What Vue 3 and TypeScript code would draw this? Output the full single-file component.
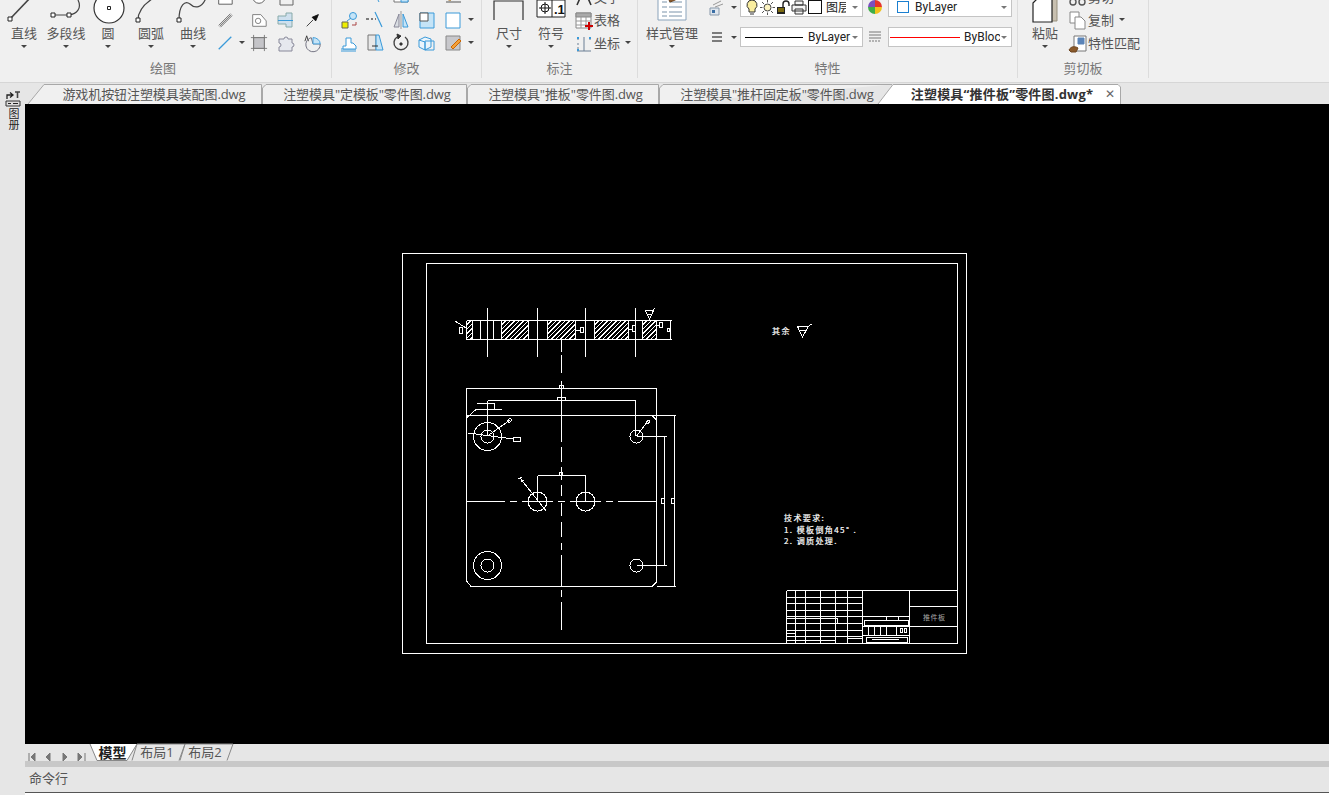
<script setup lang="ts">
interface Shape {
	d: string
	s?: string
	f?: string
	w?: number
}

interface BigTool {
	label: string
	width: number
	shapes: Shape[]
}

const blue = "#3a9ad9"
const pale = "#c5e4f7"

// path for a circle, the icons use a lot of them
const circ = (x: number, y: number, r: number) =>
	`M${x - r} ${y}a${r} ${r} 0 1 0 ${r * 2} 0a${r} ${r} 0 1 0 ${-r * 2} 0`
const sq = (x: number, y: number, r = 2) => `M${x - r} ${y - r}h${r * 2}v${r * 2}h${-r * 2}z`

const drawTools: BigTool[] = [
	{
		label: "直线",
		width: 48,
		shapes: [
			{ d: "M6 34L27 12", s: "#444", w: 1.6 },
			{ d: sq(6, 34), s: "#222", f: "#fff" },
		],
	},
	{
		label: "多段线",
		width: 36,
		shapes: [
			{ d: "M7 30H23C31 29 36 23 32 15", s: "#444", w: 1.2 },
			{ d: sq(7, 30), s: "#222", f: "#fff" },
			{ d: sq(23, 30), s: "#222", f: "#fff" },
		],
	},
	{
		label: "圆",
		width: 48,
		shapes: [
			{ d: circ(21, 23, 15), s: "#333", f: "#fff", w: 1.2 },
			{ d: sq(21, 23, 1.5), s: "#222", f: "#fff" },
		],
	},
	{
		label: "圆弧",
		width: 38,
		shapes: [
			{ d: "M7 35C7 27 12 20 21 14", s: "#444", w: 1.2 },
			{ d: sq(7, 35), s: "#222", f: "#fff" },
		],
	},
	{
		label: "曲线",
		width: 46,
		shapes: [
			{ d: "M6 35C6 20 12 15 17 19C22 24 29 23 33 13", s: "#444", w: 1.2 },
			{ d: sq(6, 35), s: "#222", f: "#fff" },
		],
	},
]

// null keeps the grid cell empty
const drawGrid: (Shape[] | null | "caret")[] = [
	[{ d: "M3 10h15v8H3z", f: "#fff" }],
	null,
	[{ d: circ(10, 10, 7), f: "#fff" }],
	[{ d: "M4 6V18H17V6M2 8h16", s: "#666" }],
	null,

	[{ d: "M3 16L16 3M5 18L18 5M4 17L17 4", s: "#666", w: 1 }],
	null,
	[
		{ d: "M3 4h9l6 7v6H3z", s: "#777", f: "#fff" },
		{ d: circ(9, 11, 3), s: "#777" },
	],
	[
		{ d: "M2 6h8v-3h6v14h-6v-3H2z", s: "#8aa", f: "#cfe0ee" },
		{ d: "M2 10.5h15", s: blue },
	],
	[
		{ d: "M3 17L10 10", s: "#333" },
		{ d: "M9 7l7-3-3 7z", s: "#111", f: "#111" },
	],

	[{ d: "M3 17L17 3", s: blue, w: 1.4 }],
	"caret",
	[
		{ d: "M4 4h12v12H4z", s: "#888", f: "#c4c4c8" },
		{ d: "M1 4h18M1 16h18M4 1v18M16 1v18", s: "#777" },
	],
	[{ d: "M3 6h5a2 2 0 1 1 4 0h4v4a2 2 0 1 1 0 4v4H3v-4a2 2 0 1 0 0-4z", s: "#889", f: "#e6e8ee" }],
	[
		{ d: "M8 4A8 8 0 1 0 18 11H10z", s: "#667" },
		{ d: "M10 4a8 7 0 0 1 8 7H10z", s: blue, f: pale },
		{ d: "M1 8L3 2L5 8", s: "#333" },
	],
]

const modifyGrid: (Shape[] | null | "caret")[] = [
	[{ d: "M10 1v9M7 7l3 4 3-4", s: "#444" }],
	[{ d: "M7 1L14 15", s: blue }],
	[
		{ d: "M3 1h14v14H3z", s: "#777", f: "#fff" },
		{ d: "M10 1h7v14h-7z", s: blue, f: pale },
	],
	[{ d: "M2 1h16v11H2z", s: "#777", f: "#fff" }],
	[
		{ d: "M4 12L12 3l3 3-8 8z", s: "#b96", f: "#eeb98a" },
		{ d: "M3 15h15", s: "#555" },
	],
	null,

	[
		{ d: circ(14, 6, 3.5), s: blue, f: pale },
		{ d: "M8 11l4-3", s: blue },
		{ d: "M3 12h6v6H3z", s: "#665", f: "#ee0" },
		{ d: "M13 15h4v-3", s: "#a44" },
	],
	[
		{ d: "M1 9h3M6 9h2M10 9h1", s: "#555", w: 1.6 },
		{ d: "M10 2l7 15", s: blue, w: 1.2 },
	],
	[
		{ d: "M8 4L3 17h5z", s: "#889", f: "#d9dde2" },
		{ d: "M12 4l5 13h-5z", s: blue, f: pale },
		{ d: "M10 1v18", s: "#999" },
	],
	[
		{ d: "M3 3h14v15H3z", s: blue, f: pale },
		{ d: "M3 3h8v8H3z", s: "#555", f: "#fff" },
	],
	[{ d: "M3 3h14v15H3z", s: blue, f: "#fff" }],
	"caret",

	[
		{ d: "M2 16h15M2 18h15", s: blue },
		{ d: "M4 13h3V5h5v5h2l3 3v3H4z", s: blue, f: "#fff" },
	],
	[
		{ d: "M3 2h8v15H3z", s: "#777", f: "#e8e8e8" },
		{ d: "M11 2h3l4 15h-7z", s: blue, f: pale },
		{ d: "M7 13h6", s: "#333" },
	],
	[
		{ d: "M14 4A7 7 0 1 1 6 4", s: "#444", w: 1.4 },
		{ d: "M6 1l4 2-3 3z", s: "#333", f: "#333" },
		{ d: sq(10, 11, 1), s: "#333", f: "#333" },
	],
	[
		{ d: "M2 7l6-3 6 2v8l-6 3-6-3z", s: blue, f: "#eaf5fc" },
		{ d: "M8 8h9v9H8z", s: blue },
		{ d: "M2 7l6 2v8", s: blue },
	],
	[
		{ d: "M3 3h14v14H3z", s: "#888", f: "#c8c8cc" },
		{ d: "M8 14l8-8 2 2-8 8z", s: "#c60", f: "#f3a13c" },
	],
	"caret",
]

const dimTools: BigTool[] = [
	{ label: "尺寸", width: 54, shapes: [{ d: "M5 35V16H34V35", s: "#333", w: 1.2 }] },
	{ label: "符号", width: 30, shapes: [{ d: "M6 15H34V32H6zM21 15V32", s: "#222", f: "#fff" }, { d: `${circ(14, 23, 4)}M8 23H20M14 17V29`, s: "#111" }] },
]

const styleTool: BigTool = {
	label: "样式管理",
	width: 68,
	shapes: [
		{ d: "M6 11H34V35H6z", s: "#8aa3bb", f: "#fff" },
		{ d: "M10 17H15M10 22H15M10 27H15M10 31H15M17 17H30M17 22H30M17 27H30M17 31H30", s: "#7b93aa" },
		{ d: "M17 15C22 13 27 8 30 2L33 4C30 11 25 15 18 17z", s: "#6d4520", f: "#8a5a2b" },
	],
}

const pasteTool: BigTool = {
	label: "粘贴",
	width: 54,
	shapes: [
		{ d: "M20 11H32V36H20z", s: "#98917f", f: "#c8c0b0" },
		{ d: "M8 18L14 12H27V37H8z", s: "#222", f: "#fff", w: 1.2 },
	],
}

const dimList: { label: string; caret?: boolean; shapes: Shape[] }[] = [
	{ label: "文字", shapes: [{ d: "M3 18L10 2l7 16M6 12h8", s: "#333", w: 1.6 }] },
	{
		label: "表格",
		shapes: [
			{ d: "M2 3H17V18H2z", s: "#888", f: "#fff" },
			{ d: "M2 3H17V7H2z", s: "#888", f: "#aaa" },
			{ d: "M2 11H17M2 15H17M7 7V18M12 7V18", s: "#999" },
			{ d: "M11 16h8M15 12v8", s: "#c00", w: 2 },
		],
	},
	{
		label: "坐标",
		caret: true,
		shapes: [
			{ d: "M3 18H17M10 4V18M4 5v2M4 10v2M4 14v2M16 5v2", s: "#6a7f94" },
			{ d: "M3 5h2M15 5h2M3 17h2", s: blue, w: 2 },
		],
	},
]

const clipList: { label: string; caret?: boolean; shapes: Shape[] }[] = [
	{ label: "剪切", shapes: [{ d: `${circ(5, 15, 3)}${circ(14, 15, 3)}M6 12L14 3M13 12L5 3`, s: "#555", w: 1.4 }] },
	{
		label: "复制",
		caret: true,
		shapes: [
			{ d: "M2 2H11V13H2z", s: "#888", f: "#fff" },
			{ d: "M7 7H13L17 11V19H7z", s: "#888", f: "#fff" },
		],
	},
	{
		label: "特性匹配",
		shapes: [
			{ d: "M6 3H18V18H6z", s: "#777", f: "#fff" },
			{ d: "M10 5H16V11H10z", s: "#5b84b8", f: "#5b84b8" },
			{ d: "M1 17C3 13 7 13 10 15L8 19H3z", s: "#6d4520", f: "#8a5a2b" },
		],
	},
]

const docTabs = [
	{ name: "游戏机按钮注塑模具装配图.dwg", width: 234, pad: 18, kind: "first" },
	{ name: "注塑模具\"定模板\"零件图.dwg", width: 205, pad: 5, kind: "plain" },
	{ name: "注塑模具\"推板\"零件图.dwg", width: 192, pad: 5, kind: "plain" },
	{ name: "注塑模具\"推杆固定板\"零件图.dwg", width: 219, pad: 17, kind: "open" },
	{ name: "注塑模具“推件板”零件图.dwg*", width: 243, pad: 5, kind: "active" },
]

const tabOutline = (w: number, kind: string) => {
	if (kind === "first") return `M0 20L16 .5H${w - 0.5}V20`
	if (kind === "open") return `M.5 20V4L4 .5H${w + 14}`
	if (kind === "active") return `M0 20L15 .5H${w - 3}L${w - 0.5} 3V20`
	return `M.5 20V4L4 .5H${w - 0.5}V20`
}

const sheets = [
	{ name: "模型", active: true, outline: "M0 0L7 16.500H37L47 0" },
	{ name: "布局1", active: false, outline: "M-5 16.500L0 0H48L42 16.500" },
	{ name: "布局2", active: false, outline: "M-5 16.500L0 0H48L42 16.500" },
]

// drawing, in window coordinates
const frame = "M402.500 253.500H966.500V653.500H402.500zM426.500 263.500H957.500V643.500H426.500z"

const section = [
	"M466.500 320.500H671.500M466.500 339.500H671.500M466.500 320.500V339.500",
	"M472.500 320.500V339.500M480.500 320.500V339.500M493.500 320.500V339.500M501.500 320.500V339.500M528.500 320.500V339.500",
	"M547.500 320.500V339.500M575.500 320.500V339.500M594.500 320.500V339.500M628.500 320.500V339.500M642.500 320.500V339.500M656.500 320.500V339.500M670.500 320.500V339.500",
	"M487.500 308V357M537.500 308V357M585.500 308V357M635.500 308V357",
	"M561.500 340V352M561.500 355V373",
	"M455 321L466 328M459.500 327.500h3v6h-3zM580.500 327.500h3v5h-3zM575 330h5M632.500 325.500h3v6h-3zM628 329h4M659.500 322.500h3v5h-3zM656 325h3M667.500 328.500h2v3h-2z",
	"M645.500 310.500h8l-4 9zM647 314.500h5M653 310L654.500 308.500",
].join("")

// section hatching: 45 degree lines cut to each region
const hatchLines = (x0: number, w: number, y0 = 320.5, h = 19, step = 4.5) => {
	let d = ""
	for (let c = x0 - h + step; c < x0 + w; c += step) {
		const left = Math.max(c, x0)
		const right = Math.min(c + h, x0 + w)
		d += `M${left} ${y0 + h - (left - c)}L${right} ${y0 + h - (right - c)}`
	}
	return d
}

const hatches = [
	hatchLines(466.5, 6),
	hatchLines(501.5, 27),
	hatchLines(547.5, 28),
	hatchLines(594.5, 34),
	hatchLines(642.5, 14),
].join("")

const plan = [
	"M466.500 388V581L471 586.500H652L656.500 582V388",
	"M466.500 415.500H675.500M466.500 388.500H656.500M652 415.500L656.500 420",
	"M466.500 418L476 409.500H502M476.500 403.500H494.500V409.500M487.500 400.500H635.500M487.500 400.500V436M635.500 400.500V436",
	"M557.500 397.500H565.500V400.500H557.500zM559.500 385.500H563.500V388.500H559.500z",
	"M561.500 381V442M561.500 447V462M561.500 467V480M561.500 485V496M561.500 503V516M561.500 522V537M561.500 543V550M561.500 555V586M561.500 590V597M561.500 602V630",
	"M466.500 501.500H505M510 501.500H517M522 501.500H553M558 501.500H565M570 501.500H601M606 501.500H613M618 501.500H656.500",
	"M537.500 475.500V501M585.500 475.500V501M537.500 475.500H585.500M559.500 472.500H562.500V475.500H559.500z",
	"M520 478L546.500 511.500M518.500 479l3-2M521 482l3-2",
	"M468 433L513 439M487.500 436L510 420M513.500 437.500H520.500V441.500H513.500zM507 421l3-3 2 2-3 3z",
	"M636.500 436L648 421M646 423l2-3 2 1-2 3z",
	"M636.500 436.500H666.500M664.500 436.500V565.500M636.500 565.500H666.500M674.500 415.500V586.500M656.500 586.500H675.500",
	"M661.500 498.500H664.500V503.500H661.500zM671.500 498.500H674.500V503.500H671.500z",
	circ(487.5, 436.5, 14),
	circ(487.5, 436.5, 6.5),
	circ(636.5, 436.5, 6.5),
	circ(537.5, 501.5, 9.5),
	circ(585.5, 501.5, 9.5),
	circ(487.5, 565.5, 14),
	circ(487.5, 565.5, 6.5),
	circ(636.5, 565.5, 6.5),
].join("")

const roughness = "M797.500 326.500H808.500L802.500 337zM799.500 330.500H806.500M808.500 326.500L811.500 324"

const titleBlock = [
	"M786.500 590.500H957.500V643M786.500 590.500V643",
	"M795.500 590.500V643M805.500 590.500V643M820.500 590.500V643M835.500 590.500V643M847.500 590.500V643M862.500 590.500V643M909.500 590.500V643",
	"M786.500 597.500H862.500M786.500 603.500H862.500M786.500 610.500H862.500M786.500 616.500H862.500M786.500 623.500H862.500M786.500 630.500H862.500M786.500 636.500H862.500",
	"M786.500 618.500H837.500V623M786.500 633.500H796M786.500 640.500H835M848 638.500H862",
	"M862.500 616.500H909.500M862.500 626.500H909.500M862.500 635.500H909.500",
	"M864.500 620.500H908.500V625H864.500zM886.500 616.500V620M898.500 616.500V620",
	"M868.500 626.500V635M874.500 626.500V635M880.500 626.500V635M886.500 626.500V635M896.500 626.500V635",
	"M866.500 637.500H907.500V642H866.500zM872 639.500H899",
	"M900.500 628.500H902.500V632H900.500zM904.500 628.500H906.500V632H904.500z",
	"M909.500 606.500H957.500M909.500 626.500H957.500",
].join("")
</script>

<template>
	<div class="app">
		<div class="ribbon">
			<section class="panel draw-panel" style="width: 332px">
				<div class="panel-body">
					<div v-for="tool in drawTools" :key="tool.label" class="big" :style="{ width: tool.width + 'px' }">
						<svg class="big-icon" width="40" height="40" viewBox="0 0 40 40">
							<path v-for="(p, i) in tool.shapes" :key="i" :d="p.d" :stroke="p.s ?? '#555'" :fill="p.f ?? 'none'" :stroke-width="p.w ?? 1" />
						</svg>
						<span class="big-label">{{ tool.label }}</span>
						<i class="caret big-caret"></i>
					</div>
					<div class="icon-grid draw-grid">
						<div v-for="(cell, n) in drawGrid" :key="n" class="cell">
							<i v-if="cell === 'caret'" class="caret"></i>
							<svg v-else-if="cell" width="20" height="20" viewBox="0 0 20 20">
								<path v-for="(p, i) in cell" :key="i" :d="p.d" :stroke="p.s ?? '#555'" :fill="p.f ?? 'none'" :stroke-width="p.w ?? 1" />
							</svg>
						</div>
					</div>
				</div>
				<div class="panel-title">绘图</div>
			</section>

			<section class="panel" style="width: 150px">
				<div class="panel-body modify-body">
					<div class="icon-grid modify-grid">
						<div v-for="(cell, n) in modifyGrid" :key="n" class="cell">
							<i v-if="cell === 'caret'" class="caret"></i>
							<svg v-else-if="cell" width="20" height="20" viewBox="0 0 20 20">
								<path v-for="(p, i) in cell" :key="i" :d="p.d" :stroke="p.s ?? '#555'" :fill="p.f ?? 'none'" :stroke-width="p.w ?? 1" />
							</svg>
						</div>
					</div>
				</div>
				<div class="panel-title">修改</div>
			</section>

			<section class="panel" style="width: 156px">
				<div class="panel-body">
					<div v-for="tool in dimTools" :key="tool.label" class="big" :style="{ width: tool.width + 'px' }">
						<svg class="big-icon" width="40" height="40" viewBox="0 0 40 40">
							<path v-for="(p, i) in tool.shapes" :key="i" :d="p.d" :stroke="p.s ?? '#555'" :fill="p.f ?? 'none'" :stroke-width="p.w ?? 1" />
							<text v-if="tool.label === '符号'" x="23" y="29" class="symbol-text">.1</text>
						</svg>
						<span class="big-label">{{ tool.label }}</span>
						<i class="caret big-caret"></i>
					</div>
					<div class="tool-list dim-list">
						<div v-for="item in dimList" :key="item.label" class="tool-row">
							<svg width="20" height="20" viewBox="0 0 20 20">
								<path v-for="(p, i) in item.shapes" :key="i" :d="p.d" :stroke="p.s ?? '#555'" :fill="p.f ?? 'none'" :stroke-width="p.w ?? 1" />
							</svg>
							<span>{{ item.label }}</span>
							<i v-if="item.caret" class="caret"></i>
						</div>
					</div>
				</div>
				<div class="panel-title">标注</div>
			</section>

			<section class="panel" style="width: 380px">
				<div class="panel-body">
					<div class="big" :style="{ width: styleTool.width + 'px' }">
						<svg class="big-icon" width="40" height="40" viewBox="0 0 40 40">
							<path v-for="(p, i) in styleTool.shapes" :key="i" :d="p.d" :stroke="p.s ?? '#555'" :fill="p.f ?? 'none'" :stroke-width="p.w ?? 1" />
						</svg>
						<span class="big-label">{{ styleTool.label }}</span>
						<i class="caret big-caret"></i>
					</div>
					<div class="props">
						<div class="prop-slot">
							<svg width="18" height="18" viewBox="0 0 18 18">
								<path d="M2 10h9v7H2z" stroke="#8899aa" fill="#dfe6ee" />
								<path d="M4 12h3v3H4z" fill="#3a6ea5" />
								<path d="M5 7L13 3M7 9L15 6" stroke="#999" fill="none" />
							</svg>
							<i class="caret"></i>
						</div>
						<div class="combo">
							<div class="layer-icons">
								<svg width="14" height="17" viewBox="0 0 14 17">
									<path d="M7 1a5 5 0 0 0-3 9v3h6v-3a5 5 0 0 0-3-9z" stroke="#333" fill="#f9eda0" />
									<path d="M5 15h4" stroke="#333" />
								</svg>
								<svg width="15" height="15" viewBox="0 0 15 15">
									<path :d="circ(7.5, 7.5, 3.5)" stroke="#444" fill="#fbf3c0" />
									<path d="M7.500 0v2.500M7.500 12.500V15M0 7.500h2.500M12.500 7.500H15M2 2l2 2M11 11l2 2M13 2l-2 2M4 11l-2 2" stroke="#555" />
								</svg>
								<svg width="14" height="15" viewBox="0 0 14 15">
									<path d="M1 7h8v7H1z" fill="#222" />
									<path d="M2 9h6M2 11h6" stroke="#d8b500" />
									<path d="M7 7V4a3 3 0 0 1 6 0v2" stroke="#222" fill="none" stroke-width="1.400" />
								</svg>
								<svg width="16" height="15" viewBox="0 0 16 15">
									<path d="M4 1h8v4H4zM1 5h14v6H1zM4 9h8v5H4z" stroke="#333" fill="#f4f4f4" />
								</svg>
								<i class="layer-box"></i>
								<span class="clip-text">图层</span>
							</div>
							<i class="caret soft"></i>
						</div>
						<div class="prop-wheel">
							<svg width="14" height="14" viewBox="0 0 14 14">
								<path d="M7 7V0A7 7 0 0 1 14 7z" fill="#e5352b" />
								<path d="M7 7H14A7 7 0 0 1 7 14z" fill="#f1c21b" />
								<path d="M7 7V14A7 7 0 0 1 0 7z" fill="#3fae49" />
								<path d="M7 7H0A7 7 0 0 1 7 0z" fill="#7a4fc0" />
							</svg>
						</div>
						<div class="combo color-combo">
							<i class="color-box"></i>
							<span class="combo-text">ByLayer</span>
							<i class="caret soft"></i>
						</div>

						<div class="prop-slot">
							<svg width="18" height="18" viewBox="0 0 18 18">
								<path d="M4 5h10M4 9h10M4 13h10" stroke="#555" stroke-width="1.400" />
							</svg>
							<i class="caret"></i>
						</div>
						<div class="combo">
							<i class="combo-line black"></i>
							<span class="combo-text">ByLayer</span>
							<i class="caret soft"></i>
						</div>
						<div class="prop-wheel">
							<svg width="14" height="12" viewBox="0 0 14 12">
								<path d="M1 1h12M1 4h12M1 7h12" stroke="#777" />
								<path d="M1 10h12" stroke="#777" stroke-dasharray="2 1" />
							</svg>
						</div>
						<div class="combo">
							<i class="combo-line red"></i>
							<span class="combo-text clipped">ByBlock</span>
							<i class="caret soft"></i>
						</div>
					</div>
				</div>
				<div class="panel-title">特性</div>
			</section>

			<section class="panel" style="width: 131px">
				<div class="panel-body">
					<div class="big" :style="{ width: pasteTool.width + 'px' }">
						<svg class="big-icon" width="40" height="40" viewBox="0 0 40 40">
							<path v-for="(p, i) in pasteTool.shapes" :key="i" :d="p.d" :stroke="p.s ?? '#555'" :fill="p.f ?? 'none'" :stroke-width="p.w ?? 1" />
						</svg>
						<span class="big-label">{{ pasteTool.label }}</span>
						<i class="caret big-caret"></i>
					</div>
					<div class="tool-list clip-list">
						<div v-for="item in clipList" :key="item.label" class="tool-row">
							<svg width="20" height="20" viewBox="0 0 20 20">
								<path v-for="(p, i) in item.shapes" :key="i" :d="p.d" :stroke="p.s ?? '#555'" :fill="p.f ?? 'none'" :stroke-width="p.w ?? 1" />
							</svg>
							<span>{{ item.label }}</span>
							<i v-if="item.caret" class="caret"></i>
						</div>
					</div>
				</div>
				<div class="panel-title">剪切板</div>
			</section>
		</div>

		<div class="workspace">
			<aside class="side">
				<svg width="16" height="18" viewBox="0 0 16 18">
					<path d="M2 9V5h5M5 2.500L8 5 5 7.500" stroke="#222" fill="none" stroke-width="1.300" />
					<path d="M10 2h5M12.500 2v6" stroke="#444" stroke-width="1.600" />
					<path d="M1 11h14v5H1z" stroke="#333" fill="#ddd" />
					<path d="M3 13.500h3M8 13.500h5" stroke="#222" />
				</svg>
				<span class="side-text">图册</span>
			</aside>

			<div class="main">
				<div class="doc-tabs">
					<div
						v-for="tab in docTabs"
						:key="tab.name"
						class="doc-tab"
						:class="{ active: tab.kind === 'active' }"
						:style="{ width: tab.width + 'px', paddingLeft: tab.pad + 'px' }">
						<svg class="doc-shape" :width="tab.width" height="20" :viewBox="`0 0 ${tab.width} 20`">
							<path :d="tabOutline(tab.width, tab.kind)" :fill="tab.kind === 'active' ? '#fff' : '#f0f0f0'" stroke="#a8a8a8" />
						</svg>
						<span class="doc-name">{{ tab.name }}</span>
						<span v-if="tab.kind === 'active'" class="doc-close">✕</span>
					</div>
				</div>

				<svg class="canvas" width="1304" height="640" viewBox="25 104 1304 640">
					<rect x="25" y="104" width="1304" height="640" fill="#000" />
					<g fill="none" stroke="#fff" shape-rendering="crispEdges">
						<path :d="hatches" />
						<path :d="frame" />
						<path :d="section" />
						<path :d="plan" />
						<path :d="roughness" />
						<path :d="titleBlock" />
					</g>
					<g class="cad-text">
						<text x="772" y="334">其余</text>
						<text x="784" y="521">技术要求:</text>
						<text x="784" y="533">1. 模板倒角45° .</text>
						<text x="784" y="544">2. 调质处理.</text>
						<text x="923" y="620" class="part-name">推件板</text>
					</g>
				</svg>

				<div class="sheet-bar">
					<div class="sheet-nav">
						<svg width="60" height="10" viewBox="0 0 60 10">
							<path d="M1 1v8M7 1L3 5l4 4zM22 1l-4 4 4 4zM35 1l4 4-4 4zM50 1l4 4-4 4zM57 1v8" stroke="#777" fill="#777" />
						</svg>
					</div>
					<div class="sheet-tabs">
						<div v-for="s in sheets" :key="s.name" class="sheet" :class="{ active: s.active }">
							<svg class="sheet-shape" width="48" height="17" viewBox="0 0 48 17">
								<path :d="s.outline" :fill="s.active ? '#fff' : 'none'" stroke="#888" />
							</svg>
							<span class="sheet-name">{{ s.name }}</span>
						</div>
					</div>
				</div>
				<div class="strip"></div>
				<div class="command">命令行</div>
				<div class="command-input"></div>
			</div>
		</div>
	</div>
</template>

<style>
html,
body {
	margin: 0;
	overflow: hidden;
	background: #e6e6e6;
}
</style>

<style scoped>
.app {
	width: 1329px;
	height: 795px;
	display: flex;
	flex-direction: column;
	overflow: hidden;
	background: #e6e6e6;
	font-family: "Open Sans", "Noto Sans CJK SC", sans-serif;
	font-size: 13px;
	color: #555;
}

.ribbon {
	height: 82px;
	flex: none;
	display: flex;
	overflow: hidden;
	background: #f0f0f0;
	border-bottom: 1px solid #d6d6d6;
	box-sizing: content-box;
}

.panel {
	flex: none;
	height: 78px;
	box-sizing: border-box;
	border-right: 1px solid #dcdcdc;
	display: flex;
	flex-direction: column;
}

.panel-body {
	margin-top: -15px;
	height: 75px;
	display: flex;
	align-items: flex-start;
}

.panel-title {
	text-align: center;
	line-height: 16px;
	margin-top: 0;
	color: #777;
}

.draw-panel .panel-title {
	padding-right: 5px;
}

.big {
	flex: none;
	display: flex;
	flex-direction: column;
	align-items: center;
}

.big-icon {
	flex: none;
	margin: 0 -10px;
}

.big-label {
	line-height: 16px;
	white-space: nowrap;
	color: #555;
}

.big-caret {
	margin-top: 4px;
}

.caret {
	display: inline-block;
	flex: none;
	width: 0;
	height: 0;
	border-left: 3px solid transparent;
	border-right: 3px solid transparent;
	border-top: 3px solid #444;
}

.caret.soft {
	border-top-color: #777;
}

.icon-grid {
	display: grid;
	grid-auto-rows: 23px;
	flex: none;
}

.draw-grid {
	grid-template-columns: 18px 16px 18px 36px 18px;
}

.modify-body {
	padding-left: 4px;
}

.modify-grid {
	grid-template-columns: 26px 26px 26px 26px 26px 10px;
}

.cell {
	display: flex;
	align-items: center;
	justify-content: center;
}

.tool-list {
	flex: none;
	display: flex;
	flex-direction: column;
}

.dim-list {
	padding-left: 8px;
}

.clip-list {
	margin-left: -4px;
}

.tool-row {
	height: 23px;
	display: flex;
	align-items: center;
	white-space: nowrap;
	color: #555;
}

.tool-row .caret {
	margin-left: 5px;
}

.props {
	margin-top: 12px;
	display: grid;
	grid-template-columns: 33px 123px 25px 124px;
	grid-template-rows: 20px 20px;
	row-gap: 10px;
	margin-left: 1px;
}

.prop-slot {
	display: flex;
	align-items: center;
	padding-left: 1px;
	gap: 5px;
}

.prop-wheel {
	display: flex;
	align-items: center;
	justify-content: center;
	padding-right: 1px;
}

.combo {
	box-sizing: border-box;
	background: #fff;
	border: 1px solid #c4c4c4;
	display: flex;
	align-items: center;
	padding: 0 4px;
	min-width: 0;
	overflow: hidden;
}

.combo > .caret {
	margin-left: auto;
}

.combo-text {
	font-family: Roboto, sans-serif;
	font-size: 12px;
	color: #222;
	white-space: nowrap;
}

.combo-text.clipped {
	width: 36px;
	overflow: hidden;
}

.combo-line {
	flex: none;
	height: 1px;
	margin-right: 5px;
}

.combo-line.black {
	width: 58px;
	background: #000;
}

.combo-line.red {
	width: 70px;
	margin: 0 4px 0 -3px;
	background: #f00;
}

.color-combo {
	padding-left: 8px;
}

.color-box {
	flex: none;
	width: 10px;
	height: 10px;
	border: 1px solid #1a7fd0;
	margin-right: 6px;
}

.layer-icons {
	display: flex;
	align-items: center;
	gap: 1px;
	min-width: 0;
}

.layer-box {
	flex: none;
	width: 12px;
	height: 12px;
	border: 1px solid #111;
	background: #fff;
}

.clip-text {
	width: 20px;
	overflow: hidden;
	white-space: nowrap;
	margin-left: 3px;
	font-size: 12px;
	color: #222;
}

.symbol-text {
	font-family: "Liberation Sans", sans-serif;
	font-size: 13px;
	font-weight: 700;
	fill: #111;
}

.doc-tabs {
	height: 20px;
	flex: none;
	margin-top: 1px;
	padding-left: 3px;
	display: flex;
	background: #e6e6e6;
}

.doc-tab {
	flex: none;
	position: relative;
	box-sizing: border-box;
	display: flex;
	align-items: center;
	justify-content: center;
	height: 20px;
	letter-spacing: -0.08px;
}

.doc-tab.active {
	font-weight: 700;
	color: #333;
	letter-spacing: 0.2px;
}

.doc-shape {
	position: absolute;
	left: 0;
	top: 0;
	overflow: visible;
}

.doc-name {
	position: relative;
	white-space: nowrap;
	line-height: 20px;
}

.doc-close {
	position: absolute;
	left: 227px;
	top: 0;
	line-height: 20px;
	font-size: 12px;
	font-weight: 400;
	color: #666;
}

.workspace {
	flex: 1;
	min-height: 0;
	display: flex;
}

.side {
	flex: none;
	width: 25px;
	box-sizing: border-box;
	padding: 7px 0 0 1px;
	display: flex;
	flex-direction: column;
	align-items: center;
}

.side-text {
	writing-mode: vertical-rl;
	font-size: 11px;
	line-height: 12px;
	color: #222;
}

.main {
	flex: 1;
	min-width: 0;
	display: flex;
	flex-direction: column;
}

.canvas {
	flex: none;
	display: block;
}

.cad-text {
	font-family: "Noto Sans CJK SC", sans-serif;
	font-size: 8px;
	letter-spacing: 1.4px;
	fill: #fff;
	stroke: #fff;
	stroke-width: 0.2px;
}

.cad-text .part-name {
	font-size: 7px;
	letter-spacing: 0.5px;
	fill: #aaa;
	stroke: none;
}

.sheet-bar {
	height: 17px;
	flex: none;
	display: flex;
	background: #e6e6e6;
}

.sheet-nav {
	width: 65px;
	flex: none;
	padding: 4px 0 0 3px;
	box-sizing: border-box;
}

.sheet-tabs {
	display: flex;
}

.sheet {
	position: relative;
	width: 48px;
	height: 17px;
	box-sizing: border-box;
	padding-right: 8px;
	display: flex;
	align-items: center;
	justify-content: center;
}

.sheet.active {
	width: 47px;
	padding-right: 2px;
	font-weight: 700;
	font-size: 14px;
	color: #222;
	z-index: 1;
}

.sheet-shape {
	position: absolute;
	left: 0;
	top: 0;
	overflow: visible;
}

.sheet-name {
	position: relative;
	line-height: 17px;
}

.strip {
	height: 6px;
	flex: none;
	background: #c8c8c8;
}

.command {
	height: 25px;
	flex: none;
	padding-left: 4px;
	line-height: 22px;
	color: #555;
}

.command-input {
	flex: 1;
	border-top: 1px solid #555;
	background: #fff;
}
</style>
